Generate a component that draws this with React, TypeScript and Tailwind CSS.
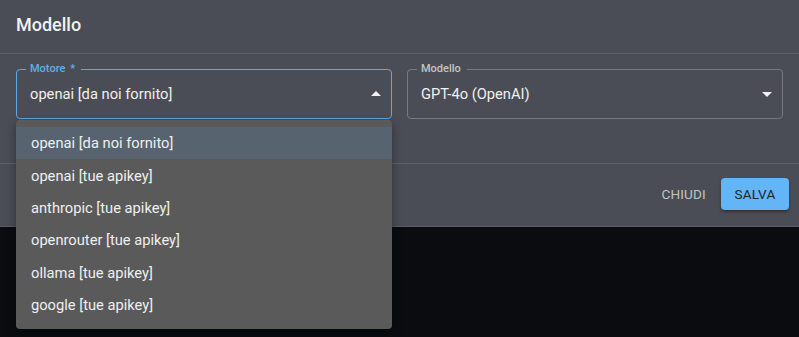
const ENGINES = [
  'openai [da noi fornito]',
  'openai [tue apikey]',
  'anthropic [tue apikey]',
  'openrouter [tue apikey]',
  'ollama [tue apikey]',
  'google [tue apikey]',
];

function Arrow({ up }: { up?: boolean }) {
  return (
    <svg width="24" height="24" viewBox="0 0 24 24" className="shrink-0 fill-[#f2f2f2]">
      <path d={up ? 'M7 14l5-5 5 5z' : 'M7 10l5 5 5-5z'} />
    </svg>
  );
}

function SelectField({
  label,
  value,
  focused,
}: {
  label: string;
  value: string;
  focused?: boolean;
}) {
  return (
    <div
      className={`relative h-[50px] rounded-[4px] border flex items-center pl-[13px] pr-[3px] ${
        focused ? 'border-[#5ca9e6]' : 'border-[#777a80]'
      }`}
    >
      <span
        className={`absolute left-[9px] -top-[8px] pl-[4px] pr-[6px] bg-[#4a4d55] text-[11px] leading-[14px] font-medium ${
          focused ? 'text-[#60aeea]' : 'text-[#c4c4c4]'
        }`}
      >
        {label}
      </span>
      <span className="flex-1 text-[14.7px] text-[#f0f0f0]">{value}</span>
      <Arrow up={focused} />
    </div>
  );
}

export default function App() {
  return (
    <div className="relative w-[799px] h-[337px] bg-[#0a0c0f] font-['Roboto',sans-serif] overflow-hidden">
      {/* Dialog */}
      <div className="bg-[#4a4d55] border-b border-[#5c5f65]">
        <div className="h-[53px] px-4 pt-[14px] text-[18px] leading-[21px] font-medium text-[#f2f2f2]">
          Modello
        </div>
        <div className="h-[110px] border-t border-[#5f6268] px-4 pt-[15px]">
          <div className="grid grid-cols-2 gap-[15px]">
            <SelectField label={'Motore\u00a0\u2009*'} value="openai [da noi fornito]" focused />
            <SelectField label="Modello" value="GPT-4o (OpenAI)" />
          </div>
        </div>
        <div className="h-[63px] border-t border-[#5f6268] flex justify-end items-start pt-[14px] pr-[10px] gap-[7px]">
          <button className="h-[32px] px-2 text-[13.5px] text-[#c2c2c2] tracking-[0.2px]">
            CHIUDI
          </button>
          <button className="h-[32px] w-[68px] rounded-[4px] bg-[#64b5f6] text-[13.5px] text-[#1c2631] tracking-[0.2px] shadow-[0_2px_3px_rgba(0,0,0,0.35)]">
            SALVA
          </button>
        </div>
      </div>

      {/* Dropdown menu */}
      <div className="absolute left-4 top-[120px] w-[376px] rounded-[4px] bg-[#5a5a5a] pt-[7px] pb-[8px] shadow-[0_4px_10px_rgba(0,0,0,0.4)]">
        {ENGINES.map((e, i) => (
          <div
            key={e}
            className={`h-[32.4px] flex items-center px-[15px] text-[14.7px] text-[#efefef] ${
              i === 0 ? 'bg-[#57636f]' : ''
            }`}
          >
            {e}
          </div>
        ))}
      </div>
    </div>
  );
}
